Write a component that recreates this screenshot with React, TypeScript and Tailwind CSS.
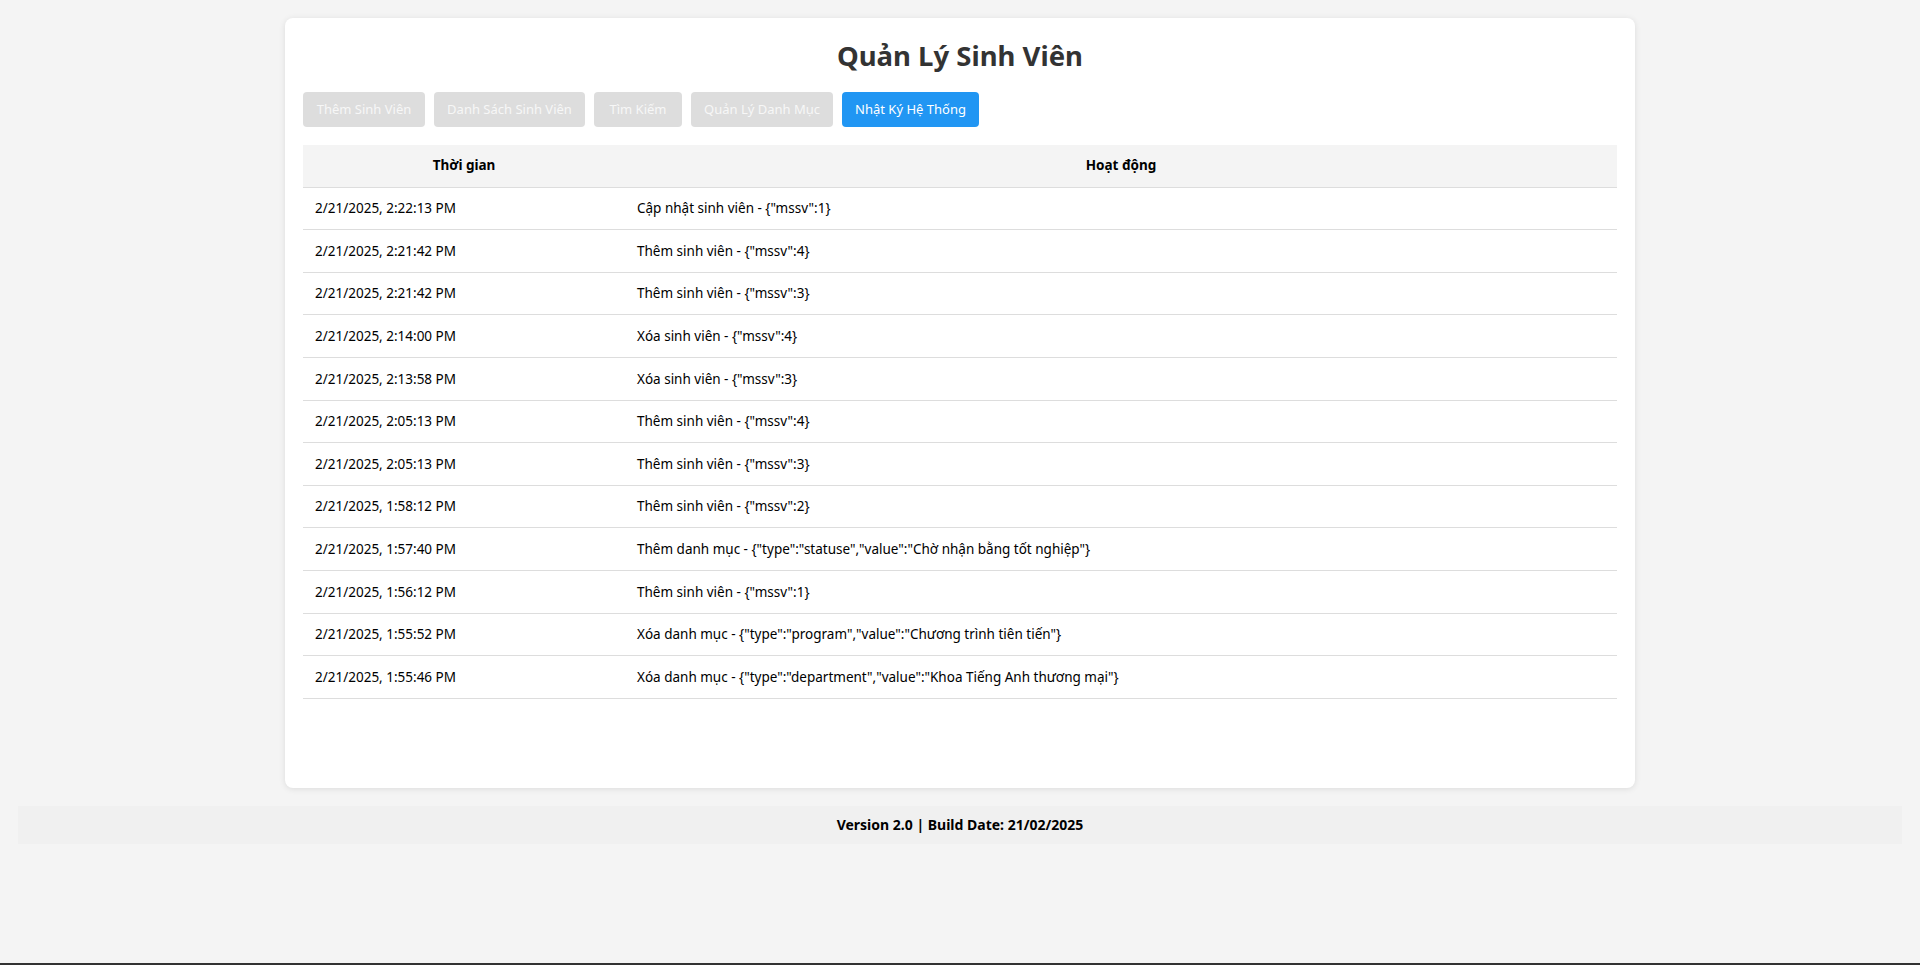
import React from 'react';

const tabs = [
  { label: 'Thêm Sinh Viên', width: 'w-[122px]' },
  { label: 'Danh Sách Sinh Viên', width: 'w-[151px]' },
  { label: 'Tìm Kiếm', width: 'w-[88px]' },
  { label: 'Quản Lý Danh Mục', width: 'w-[142px]' },
  { label: 'Nhật Ký Hệ Thống', width: 'w-[137px]' },
];

const logs = [
  { time: '2/21/2025, 2:22:13 PM', action: 'Cập nhật sinh viên - {"mssv":1}' },
  { time: '2/21/2025, 2:21:42 PM', action: 'Thêm sinh viên - {"mssv":4}' },
  { time: '2/21/2025, 2:21:42 PM', action: 'Thêm sinh viên - {"mssv":3}' },
  { time: '2/21/2025, 2:14:00 PM', action: 'Xóa sinh viên - {"mssv":4}' },
  { time: '2/21/2025, 2:13:58 PM', action: 'Xóa sinh viên - {"mssv":3}' },
  { time: '2/21/2025, 2:05:13 PM', action: 'Thêm sinh viên - {"mssv":4}' },
  { time: '2/21/2025, 2:05:13 PM', action: 'Thêm sinh viên - {"mssv":3}' },
  { time: '2/21/2025, 1:58:12 PM', action: 'Thêm sinh viên - {"mssv":2}' },
  { time: '2/21/2025, 1:57:40 PM', action: 'Thêm danh mục - {"type":"statuse","value":"Chờ nhận bằng tốt nghiệp"}' },
  { time: '2/21/2025, 1:56:12 PM', action: 'Thêm sinh viên - {"mssv":1}' },
  { time: '2/21/2025, 1:55:52 PM', action: 'Xóa danh mục - {"type":"program","value":"Chương trình tiên tiến"}' },
  { time: '2/21/2025, 1:55:46 PM', action: 'Xóa danh mục - {"type":"department","value":"Khoa Tiếng Anh thương mại"}' },
];

export default function App() {
  const activeTab = 4;

  return (
    <div className="min-h-screen flex flex-col bg-[#f4f4f4] font-['Noto_Sans',sans-serif] text-black">
      <div className="flex-1 px-[18px] pt-[18px]">
        {/* Main card */}
        <div className="mx-auto w-[1350px] bg-white rounded-lg shadow-[0_1px_6px_rgba(0,0,0,0.1)] p-[18px] pb-[89px]">
          <h1 className="text-center text-[27.5px] leading-[40px] font-bold text-[#333] mb-[16px]">
            Quản Lý Sinh Viên
          </h1>

          {/* Tabs */}
          <div className="flex gap-[9px] mb-[17.5px]">
            {tabs.map((tab, index) => (
              <button
                key={tab.label}
                className={`${tab.width} h-[35px] rounded-[4px] text-[13px] whitespace-nowrap ${
                  index === activeTab ? 'bg-[#2196f3] text-white' : 'bg-[#dddddd] text-[#f7f7f7]'
                }`}
              >
                {tab.label}
              </button>
            ))}
          </div>

          {/* Log table */}
          <table className="w-full border-collapse text-[13.5px]">
            <thead>
              <tr className="bg-[#f4f4f4] border-b border-[#dddddd]">
                <th className="w-[322px] h-[42.6px] px-3 text-center font-bold">Thời gian</th>
                <th className="h-[42.6px] px-3 text-center font-bold">Hoạt động</th>
              </tr>
            </thead>
            <tbody>
              {logs.map((log, i) => (
                <tr key={i} className="border-b border-[#dddddd]">
                  <td className="h-[42.6px] px-3 text-left">{log.time}</td>
                  <td className="h-[42.6px] px-3 text-left">{log.action}</td>
                </tr>
              ))}
            </tbody>
          </table>
        </div>

        {/* Footer */}
        <div className="mt-[18px] h-[38px] bg-[#f0f0f0] flex items-center justify-center text-[14px] font-bold">
          Version 2.0 | Build Date: 21/02/2025
        </div>
      </div>
      <div className="h-[2px] bg-[#333333]" />
    </div>
  );
}
